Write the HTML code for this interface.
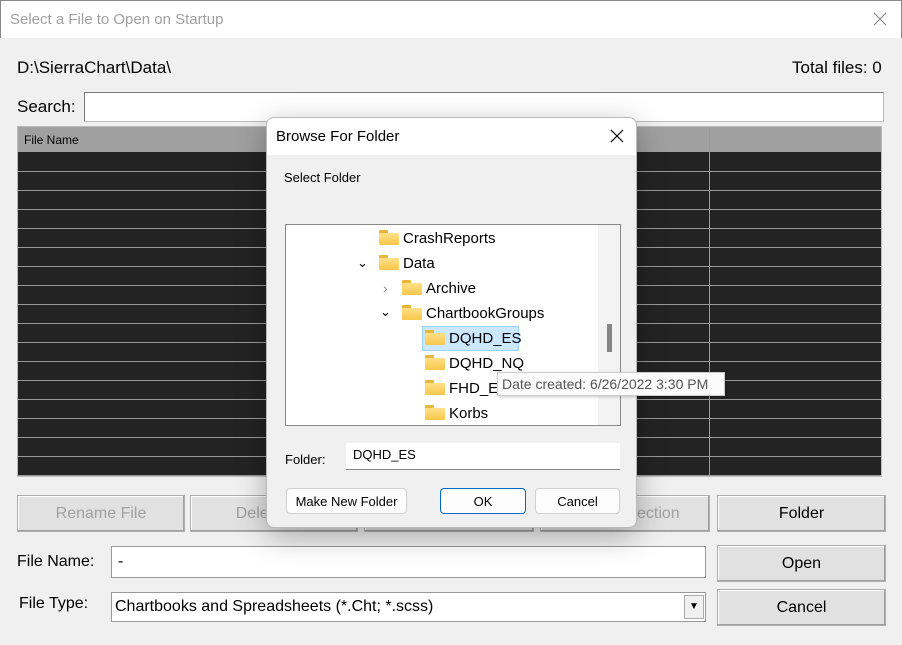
<!DOCTYPE html>
<html><head><style>
*{box-sizing:border-box;margin:0;padding:0}
body{width:902px;height:645px;background:#f0f0f0;font-family:"Liberation Sans",sans-serif;position:relative;overflow:hidden;color:#000}
.a{position:absolute}
.btn{position:absolute;background:#e1e1e1;border:1px solid #adadad;box-shadow:inset -1px -1px 0 #a0a0a0,inset 1px 1px 0 #fff;font-size:16px;text-align:center;display:flex;align-items:center;justify-content:center}
.dis{color:#a0a0a0}
.f{position:absolute;width:20px;height:15px}
.f:before{content:"";position:absolute;left:0;top:0;width:9px;height:4px;background:#e8b63a;border-radius:1px 1px 0 0}
.f:after{content:"";position:absolute;left:0;top:3px;width:20px;height:12px;background:linear-gradient(#ffe08a,#f7c74a);border-radius:1px}
.t{position:absolute;font-size:15px}
.db{position:absolute;background:#fdfdfd;border:1px solid #d0d0d0;border-radius:4px;font-size:13px;display:flex;align-items:center;justify-content:center}
</style></head><body>
<div class="a" style="left:0;top:0;width:902px;height:38px;background:#fff;border:1px solid #888;border-bottom:none"></div>
<div class="a" style="left:10px;top:11px;font-size:15px;color:#a0a0a0">Select a File to Open on Startup</div>
<svg class="a" style="left:873px;top:12px" width="14" height="14"><path d="M1 1L13 13M13 1L1 13" stroke="#888" stroke-width="1.2"/></svg>
<div class="a" style="left:17px;top:58px;font-size:17px">D:\SierraChart\Data\</div>
<div class="a" style="left:792px;top:58px;font-size:17px">Total files: 0</div>
<div class="a" style="left:17px;top:97px;font-size:17px">Search:</div>
<div class="a" style="left:84px;top:92px;width:800px;height:30px;background:#fff;border:1px solid #bbb;border-top-color:#777;border-left-color:#777"></div>
<div class="a" style="left:17px;top:126px;width:865px;height:351px;background:#232323;border:1px solid #bbb;
background-image:repeating-linear-gradient(to bottom,transparent 0,transparent 18px,#9a9a9a 18px,#9a9a9a 19px);background-position:0 26px"></div>
<div class="a" style="left:18px;top:127px;width:863px;height:25px;background:#a0a0a0"></div>
<div class="a" style="left:24px;top:133px;font-size:12px">File Name</div>
<div class="a" style="left:709px;top:127px;width:1px;height:349px;background:#9a9a9a"></div>
<div class="btn dis" style="left:17px;top:495px;width:168px;height:37px">Rename File</div>
<div class="btn dis" style="left:190px;top:495px;width:168px;height:37px">Delete File</div>
<div class="btn" style="left:364px;top:495px;width:170px;height:37px"></div>
<div class="btn dis" style="left:540px;top:495px;width:170px;height:37px">Open Selection</div>
<div class="btn" style="left:717px;top:495px;width:169px;height:37px">Folder</div>
<div class="a" style="left:17px;top:553px;font-size:16px">File Name:</div>
<div class="a" style="left:111px;top:546px;width:595px;height:32px;background:#fff;border:1px solid #999"></div>
<div class="a" style="left:118px;top:553px;font-size:16px">-</div>
<div class="btn" style="left:717px;top:545px;width:169px;height:37px">Open</div>
<div class="a" style="left:19px;top:595px;font-size:16px">File Type:</div>
<div class="a" style="left:111px;top:592px;width:595px;height:30px;background:#fff;border:1px solid #999"></div>
<div class="a" style="left:115px;top:598px;font-size:16px">Chartbooks and Spreadsheets (*.Cht; *.scss)</div>
<div class="a" style="left:684px;top:595px;width:20px;height:24px;background:#f0f0f0;border:1px solid #aaa;font-size:10px;text-align:center;line-height:22px">▼</div>
<div class="btn" style="left:717px;top:589px;width:169px;height:37px">Cancel</div>

<div class="a" style="left:266px;top:117px;width:371px;height:411px;background:#f0f0f0;border:1px solid #b8b8b8;border-radius:8px;box-shadow:0 8px 30px rgba(0,0,0,.3);overflow:hidden">
 <div class="a" style="left:0;top:0;width:371px;height:37px;background:#fff"></div>
 <div class="a" style="left:9px;top:10px;font-size:15px">Browse For Folder</div>
 <svg class="a" style="left:343px;top:11px" width="14" height="14"><path d="M1 1L13 13M13 1L1 13" stroke="#000" stroke-width="1.2"/></svg>
 <div class="a" style="left:17px;top:52px;font-size:13px">Select Folder</div>
 <div class="a" style="left:18px;top:106px;width:336px;height:202px;background:#fff;border:1px solid #888"></div>
 <div class="a" style="left:331px;top:107px;width:22px;height:200px;background:#f3f3f3"></div>
 <div class="a" style="left:340px;top:206px;width:5px;height:28px;background:#858585"></div>
 <div class="a" style="left:155px;top:208px;width:97px;height:25px;background:#cce8ff;border:1px solid #99d1ff"></div>
 <div class="f" style="left:112px;top:112px"></div><div class="t" style="left:136px;top:112px">CrashReports</div>
 <div class="t" style="left:90px;top:137px;font-size:13px">⌄</div>
 <div class="f" style="left:112px;top:137px"></div><div class="t" style="left:136px;top:137px">Data</div>
 <div class="t" style="left:116px;top:162px;font-size:14px;color:#888">›</div>
 <div class="f" style="left:135px;top:162px"></div><div class="t" style="left:159px;top:162px">Archive</div>
 <div class="t" style="left:113px;top:186px;font-size:13px">⌄</div>
 <div class="f" style="left:135px;top:187px"></div><div class="t" style="left:159px;top:187px">ChartbookGroups</div>
 <div class="f" style="left:158px;top:212px"></div><div class="t" style="left:182px;top:212px">DQHD_ES</div>
 <div class="f" style="left:158px;top:237px"></div><div class="t" style="left:182px;top:237px">DQHD_NQ</div>
 <div class="f" style="left:158px;top:262px"></div><div class="t" style="left:182px;top:262px">FHD_ES</div>
 <div class="f" style="left:158px;top:287px"></div><div class="t" style="left:182px;top:287px">Korbs</div>
 <div class="a" style="left:18px;top:334px;font-size:13px">Folder:</div>
 <div class="a" style="left:79px;top:325px;width:274px;height:27px;background:#fff;border-bottom:1px solid #888"></div>
 <div class="a" style="left:86px;top:329px;font-size:13px">DQHD_ES</div>
 <div class="db" style="left:19px;top:370px;width:121px;height:26px">Make New Folder</div>
 <div class="db" style="left:173px;top:370px;width:86px;height:26px;border:1px solid #0067c0">OK</div>
 <div class="db" style="left:268px;top:370px;width:85px;height:26px">Cancel</div>
</div>
<div class="a" style="left:497px;top:372px;width:228px;height:24px;background:#fbfbfb;border:1px solid #ccc;box-shadow:1px 1px 3px rgba(0,0,0,.2);font-size:14px;color:#555;padding:3px 0 0 4px">Date created: 6/26/2022 3:30 PM</div>
</body></html>
